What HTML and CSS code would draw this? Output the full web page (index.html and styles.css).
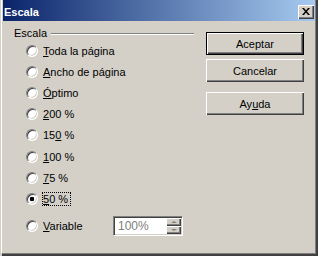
FILE: index.html
```html
<!DOCTYPE html>
<html lang="es">
<head>
  <meta charset="UTF-8" />
  <title>Escala</title>
  <link rel="stylesheet" href="styles.css">
</head>
<body>
  <div class="window">
    <div class="titlebar">
      <span class="title">Escala</span>
      <span class="close">
        <svg width="8" height="7" viewBox="0 0 8 7">
          <path d="M0 0h2l2 2.5L6 0h2L5 3.5 8 7H6L4 4.5 2 7H0l3-3.5z" fill="#000"/>
        </svg>
      </span>
    </div>

    <div class="content">
      <div class="group">
        <div class="legend">
          <span>Escala</span>
          <span class="rule"></span>
        </div>

        <div class="option"><span class="radio"></span><span class="label"><u>T</u>oda la página</span></div>
        <div class="option"><span class="radio"></span><span class="label"><u>A</u>ncho de página</span></div>
        <div class="option"><span class="radio"></span><span class="label"><u>Ó</u>ptimo</span></div>
        <div class="option"><span class="radio"></span><span class="label"><u>2</u>00 %</span></div>
        <div class="option"><span class="radio"></span><span class="label">15<u>0</u> %</span></div>
        <div class="option"><span class="radio"></span><span class="label"><u>1</u>00 %</span></div>
        <div class="option"><span class="radio"></span><span class="label"><u>7</u>5 %</span></div>
        <div class="option"><span class="radio checked"></span><span class="label focused"><u>5</u>0 %</span></div>

        <div class="option variable">
          <span class="radio"></span>
          <span class="label"><u>V</u>ariable</span>
          <div class="spin">
            <span class="spin-value">100%</span>
            <span class="spin-buttons">
              <span class="spin-btn"><i class="arrow up"></i></span>
              <span class="spin-btn"><i class="arrow down"></i></span>
            </span>
          </div>
        </div>
      </div>

      <div class="actions">
        <button class="btn default">Aceptar</button>
        <button class="btn">Cancelar</button>
        <button class="btn help">Ay<u>u</u>da</button>
      </div>
    </div>
  </div>
</body>
</html>
```

FILE: styles.css
```css
body {
  margin: 0;
  background-color: #d4d0c8;
  font-family: "Liberation Sans", Arial, sans-serif;
  font-size: 11px;
  color: #000;
}

.window {
  width: 318px;
  height: 256px;
  box-sizing: border-box;
  padding: 0 3px 3px 3px;
  background-color: #d4d0c8;
  box-shadow: inset 2px 0 0 #d4d0c8,
              inset -1px -1px 0 #404040,
              inset -2px -2px 0 #404040,
              inset -3px -3px 0 #808080;
  position: relative;
}

.window::before {
  content: "";
  position: absolute;
  left: 1px;
  top: 0;
  bottom: 3px;
  width: 1px;
  background-color: #fff;
}

/* barra de título */
.titlebar {
  height: 21px;
  display: flex;
  align-items: flex-start;
  justify-content: space-between;
  background: linear-gradient(to right, #0a246a, #a6caf0);
}

.title {
  color: #fff;
  font-weight: bold;
  line-height: 13px;
  padding: 6px 0 0 1px;
}

.close {
  width: 16px;
  height: 14px;
  margin: 5px 1px 0 0;
  box-sizing: border-box;
  background-color: #d4d0c8;
  display: flex;
  align-items: center;
  justify-content: center;
  box-shadow: inset 1px 1px 0 #fff,
              inset -1px -1px 0 #404040,
              inset -2px -2px 0 #808080;
}

.close svg {
  display: block;
  margin: 0 1px 1px 0;
}

/* contenido */
.content {
  display: flex;
  align-items: flex-start;
}

.group {
  width: 180px;
  margin: 6px 0 0 11px;
}

.legend {
  display: flex;
  align-items: center;
  height: 13px;
  line-height: 13px;
}

.rule {
  flex: 1;
  margin-left: 4px;
  border-top: 1px solid #808080;
  border-bottom: 1px solid #fff;
}

.option {
  display: flex;
  align-items: center;
  height: 21.2px;
  padding-left: 12px;
}

.radio {
  width: 12px;
  height: 12px;
  box-sizing: border-box;
  border-radius: 50%;
  border: 1px solid;
  border-color: #808080 #fff #fff #808080;
  background-color: #fff;
  box-shadow: inset 1px 1px 0 #404040, inset -1px -1px 0 #d4d0c8;
  flex: 0 0 auto;
}

.radio.checked {
  background: radial-gradient(circle, #000 2px, #fff 2.6px);
}

.label {
  margin-left: 4px;
  line-height: 12px;
  border: 1px dotted transparent;
  padding-right: 2px;
}

.label.focused {
  border-color: #000;
}

.variable {
  margin-top: 6px;
  height: 21px;
}

.variable .label {
  width: 67px;
}

.spin {
  width: 70px;
  height: 20px;
  box-sizing: border-box;
  display: flex;
  background-color: #fff;
  border: 1px solid;
  border-color: #808080 #fff #fff #808080;
  box-shadow: inset 1px 1px 0 #404040, inset -1px -1px 0 #d4d0c8;
  padding: 1px;
}

.spin-value {
  flex: 1;
  color: #808080;
  line-height: 16px;
  padding-left: 3px;
  font-size: 12px;
}

.spin-buttons {
  width: 15px;
  display: flex;
  flex-direction: column;
}

.spin-btn {
  flex: 1;
  display: flex;
  align-items: center;
  justify-content: center;
  background-color: #d4d0c8;
  box-shadow: inset 1px 1px 0 #fff,
              inset -1px -1px 0 #404040,
              inset -2px -2px 0 #808080;
}

.arrow {
  width: 0;
  height: 0;
  border-left: 3px solid transparent;
  border-right: 3px solid transparent;
}

.arrow.up {
  border-bottom: 2px solid #808080;
}

.arrow.down {
  border-top: 2px solid #808080;
}

/* botones */
.actions {
  display: flex;
  flex-direction: column;
  margin: 11px 0 0 12px;
}

.btn {
  width: 98px;
  height: 23px;
  margin: 0 0 4px 0;
  padding: 0;
  border: none;
  background-color: #d4d0c8;
  font-family: inherit;
  font-size: 11px;
  color: #000;
  box-shadow: inset 1px 1px 0 #fff,
              inset -1px -1px 0 #404040,
              inset -2px -2px 0 #808080;
}

.btn.default {
  border: 1px solid #000;
  box-shadow: inset 1px 1px 0 #fff,
              inset -1px -1px 0 #404040,
              inset -2px -2px 0 #808080;
}

.btn.help {
  margin-top: 6px;
}
```
